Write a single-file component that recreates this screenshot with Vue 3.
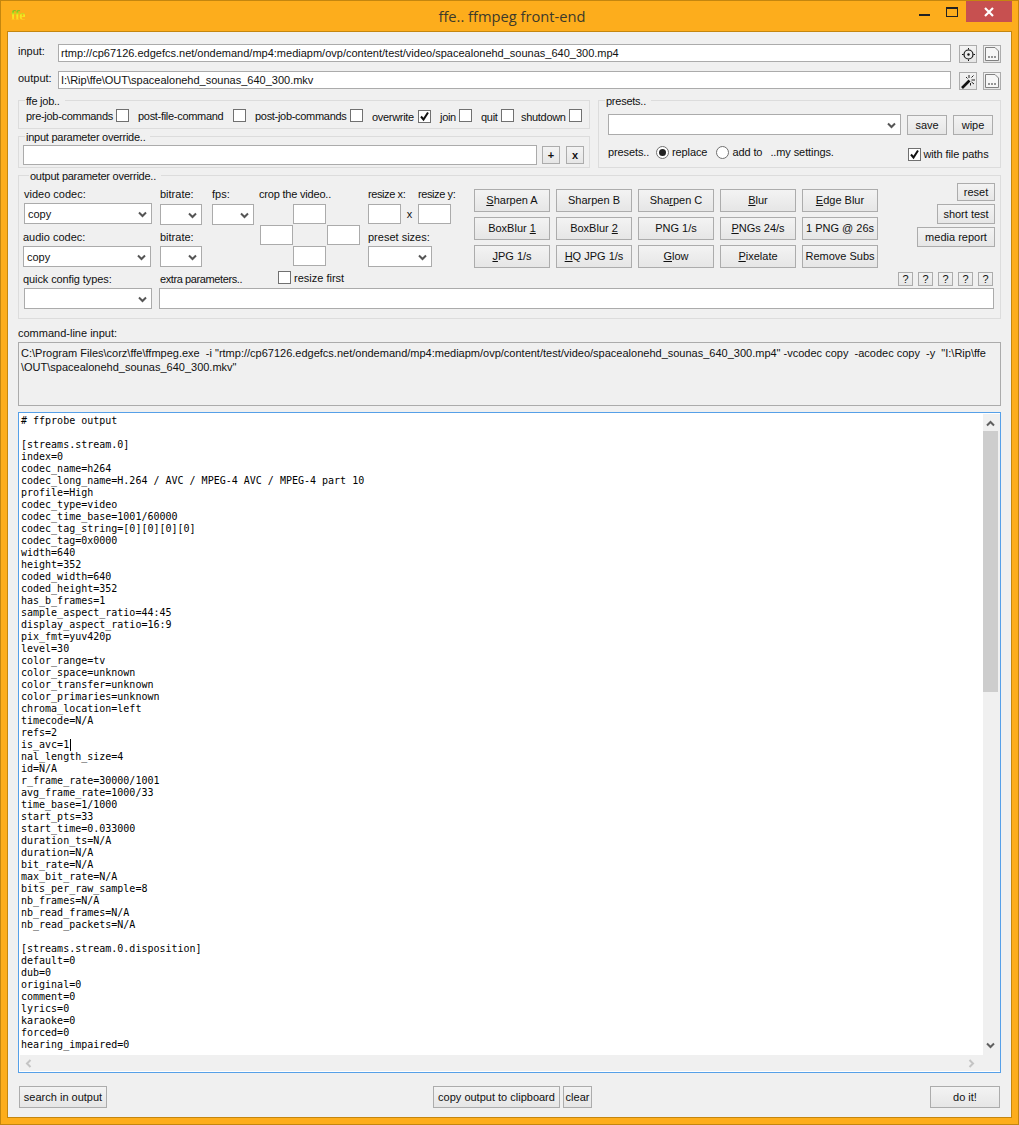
<script setup>
const jobItems = [
  { label: 'pre-job-commands', w: 103 },
  { label: 'post-file-command', w: 108 },
  { label: 'post-job-commands', w: 108 },
  { label: 'overwrite', w: 59, checked: true, low: true },
  { label: 'join', w: 32, low: true },
  { label: 'quit', w: 33, low: true },
  { label: 'shutdown', w: 61, low: true, shift: -2 },
]
const filters = [
  ['', 'S', 'harpen A'], ['Sharpen B', '', ''], ['Sha', 'r', 'pen C'], ['', 'B', 'lur'], ['', 'E', 'dge Blur'],
  ['BoxBlur ', '1', ''], ['BoxBlur ', '2', ''], ['PNG 1/s', '', ''], ['', 'P', 'NGs 24/s'], ['1 PNG @ 26s', '', ''],
  ['', 'J', 'PG 1/s'], ['', 'H', 'Q JPG 1/s'], ['', 'G', 'low'], ['', 'P', 'ixelate'], ['Remove Subs', '', ''],
]
const before = `# ffprobe output

[streams.stream.0]
index=0
codec_name=h264
codec_long_name=H.264 / AVC / MPEG-4 AVC / MPEG-4 part 10
profile=High
codec_type=video
codec_time_base=1001/60000
codec_tag_string=[0][0][0][0]
codec_tag=0x0000
width=640
height=352
coded_width=640
coded_height=352
has_b_frames=1
sample_aspect_ratio=44:45
display_aspect_ratio=16:9
pix_fmt=yuv420p
level=30
color_range=tv
color_space=unknown
color_transfer=unknown
color_primaries=unknown
chroma_location=left
timecode=N/A
refs=2
`
const after = `
nal_length_size=4
id=N/A
r_frame_rate=30000/1001
avg_frame_rate=1000/33
time_base=1/1000
start_pts=33
start_time=0.033000
duration_ts=N/A
duration=N/A
bit_rate=N/A
max_bit_rate=N/A
bits_per_raw_sample=8
nb_frames=N/A
nb_read_frames=N/A
nb_read_packets=N/A

[streams.stream.0.disposition]
default=0
dub=0
original=0
comment=0
lyrics=0
karaoke=0
forced=0
hearing_impaired=0`
</script>

<template>
  <div class="window">
    <header class="titlebar">
      <div class="app-icon">ffe</div>
      <div class="title">ffe.. ffmpeg front-end</div>
      <div class="controls">
        <span class="min"></span>
        <span class="max"></span>
        <span class="close">
          <svg width="12" height="10" viewBox="0 0 12 10"><path d="M2 1l8 8M10 1l-8 8" stroke="#fff" stroke-width="2.2" fill="none"/></svg>
        </span>
      </div>
    </header>

    <main class="client">
      <div class="path-row">
        <span class="path-label">input:</span>
        <div class="field path-field">rtmp://cp67126.edgefcs.net/ondemand/mp4:mediapm/ovp/content/test/video/spacealonehd_sounas_640_300.mp4</div>
        <button class="btn icon-btn first">
          <svg width="13" height="13" viewBox="0 0 13 13"><circle cx="6.500" cy="6.500" r="4.500" fill="none" stroke="#111" stroke-width="1.200"/><circle cx="6.500" cy="6.500" r="1.200" fill="#111"/><path d="M6.500 0v1.500M6.500 11.500V13M0 6.500h1.500M11.500 6.500H13" stroke="#111"/></svg>
        </button>
        <button class="btn icon-btn">
          <svg width="14" height="14" viewBox="0 0 14 14"><path d="M.5.5h9.500l3.500 3.500v9.500H.5z" fill="#f6f6f6" stroke="#808080"/><path d="M3 10h2M6 10h2M9 10h2" stroke="#333"/></svg>
        </button>
      </div>
      <div class="path-row second">
        <span class="path-label">output:</span>
        <div class="field path-field">I:\Rip\ffe\OUT\spacealonehd_sounas_640_300.mkv</div>
        <button class="btn icon-btn first">
          <svg width="15" height="15" viewBox="0 0 15 15"><path d="M1 14L8.500 6.500" stroke="#111" stroke-width="2.600"/><path d="M8 1v3M12.500 1.500l-2 2M14 6h-3.500M13 10l-2.500-2M9.500 9v2.500M5 3l1.500 1.500" stroke="#222" stroke-width="1" fill="none"/></svg>
        </button>
        <button class="btn icon-btn">
          <svg width="14" height="14" viewBox="0 0 14 14"><path d="M.5.5h9.500l3.500 3.500v9.500H.5z" fill="#f6f6f6" stroke="#808080"/><path d="M3 10h2M6 10h2M9 10h2" stroke="#333"/></svg>
        </button>
      </div>

      <section class="upper">
        <div class="upper-left">
          <div class="group job">
            <span class="legend">ffe job..</span>
            <div class="job-row">
              <label v-for="item in jobItems" :key="item.label" class="job-item" :style="{ width: item.w + 'px', marginLeft: (item.shift || 0) + 'px' }">
                <span :class="{ low: item.low }">{{ item.label }}</span>
                <span class="check" :class="{ low: item.checked }">
                  <svg v-if="item.checked" width="11" height="11" viewBox="0 0 11 11"><path d="M2 5.500l2.500 3L9 1.500" fill="none" stroke="#111" stroke-width="2"/></svg>
                </span>
              </label>
            </div>
          </div>
          <div class="group param">
            <span class="legend">input parameter override..</span>
            <div class="param-row">
              <div class="field param-field"></div>
              <button class="btn small-btn bold">+</button>
              <button class="btn small-btn bold">x</button>
            </div>
          </div>
        </div>

        <div class="group presets">
          <span class="legend">presets..</span>
          <div class="preset-top">
            <div class="field select preset-select">
              <svg class="chev" width="9" height="7" viewBox="0 0 9 7"><path d="M1 1.500l3.500 3.500L8 1.500" fill="none" stroke="#555" stroke-width="2"/></svg>
            </div>
            <button class="btn save">save</button>
            <button class="btn wipe">wipe</button>
          </div>
          <div class="preset-bottom">
            <span class="p-label">presets..</span>
            <span class="radio on"></span>
            <span class="r-label">replace</span>
            <span class="radio off"></span>
            <span class="r-label add">add to</span>
            <span class="my">..my settings.</span>
            <span class="check paths">
              <svg width="11" height="11" viewBox="0 0 11 11"><path d="M2 5.500l2.500 3L9 1.500" fill="none" stroke="#111" stroke-width="2"/></svg>
            </span>
            <span class="r-label paths-label">with file paths</span>
          </div>
        </div>
      </section>

      <section class="group output-group">
        <span class="legend out-legend">output parameter override..</span>
        <div class="out-grid">
          <span class="lbl c-video-l">video codec:</span>
          <div class="field select c-video">copy<svg class="chev" width="9" height="7" viewBox="0 0 9 7"><path d="M1 1.500l3.500 3.500L8 1.500" fill="none" stroke="#555" stroke-width="2"/></svg></div>
          <span class="lbl c-br1-l">bitrate:</span>
          <div class="field select c-br1"><svg class="chev" width="9" height="7" viewBox="0 0 9 7"><path d="M1 1.500l3.500 3.500L8 1.500" fill="none" stroke="#555" stroke-width="2"/></svg></div>
          <span class="lbl c-fps-l">fps:</span>
          <div class="field select c-fps"><svg class="chev" width="9" height="7" viewBox="0 0 9 7"><path d="M1 1.500l3.500 3.500L8 1.500" fill="none" stroke="#555" stroke-width="2"/></svg></div>
          <span class="lbl c-crop-l">crop the video..</span>
          <div class="field crop crop-t"></div>
          <div class="field crop crop-l"></div>
          <div class="field crop crop-r"></div>
          <div class="field crop crop-b"></div>
          <span class="lbl c-rx-l">resize x:</span>
          <span class="lbl c-ry-l">resize y:</span>
          <div class="field crop c-rx"></div>
          <span class="c-x">x</span>
          <div class="field crop c-ry"></div>
          <span class="lbl c-audio-l">audio codec:</span>
          <div class="field select c-audio">copy<svg class="chev" width="9" height="7" viewBox="0 0 9 7"><path d="M1 1.500l3.500 3.500L8 1.500" fill="none" stroke="#555" stroke-width="2"/></svg></div>
          <span class="lbl c-br2-l">bitrate:</span>
          <div class="field select c-br2"><svg class="chev" width="9" height="7" viewBox="0 0 9 7"><path d="M1 1.500l3.500 3.500L8 1.500" fill="none" stroke="#555" stroke-width="2"/></svg></div>
          <span class="lbl c-ps-l">preset sizes:</span>
          <div class="field select c-ps"><svg class="chev" width="9" height="7" viewBox="0 0 9 7"><path d="M1 1.500l3.500 3.500L8 1.500" fill="none" stroke="#555" stroke-width="2"/></svg></div>
          <span class="lbl c-q-l">quick config types:</span>
          <div class="field select c-q"><svg class="chev" width="9" height="7" viewBox="0 0 9 7"><path d="M1 1.500l3.500 3.500L8 1.500" fill="none" stroke="#555" stroke-width="2"/></svg></div>
          <span class="lbl c-ex-l">extra parameters..</span>
          <div class="c-first"><span class="check"></span><span>resize first</span></div>
          <div class="field c-ex"></div>

          <div class="filters">
            <button v-for="(f, i) in filters" :key="i" class="btn filter">{{ f[0] }}<u>{{ f[1] }}</u>{{ f[2] }}</button>
          </div>
          <div class="side">
            <button class="btn reset">reset</button>
            <button class="btn short">short test</button>
            <button class="btn report">media report</button>
            <div class="helps">
              <button v-for="n in 5" :key="n" class="btn help">?</button>
            </div>
          </div>
        </div>
      </section>

      <div class="cmd-label">command-line input:</div>
      <div class="cmd">
        <div>C:\Program Files\corz\ffe\ffmpeg.exe &nbsp;-i "rtmp://cp67126.edgefcs.net/ondemand/mp4:mediapm/ovp/content/test/video/spacealonehd_sounas_640_300.mp4" -vcodec copy &nbsp;-acodec copy &nbsp;-y &nbsp;"I:\Rip\ffe</div>
        <div>\OUT\spacealonehd_sounas_640_300.mkv"</div>
      </div>

      <div class="console">
        <div class="console-main">
          <pre class="console-text">{{ before }}is_avc=1<span class="caret"></span>{{ after }}</pre>
          <div class="vbar">
            <svg class="arrow" width="9" height="7" viewBox="0 0 9 7"><path d="M1 5.500L4.500 2 8 5.500" fill="none" stroke="#606060" stroke-width="2"/></svg>
            <div class="thumb"></div>
            <svg class="arrow down" width="9" height="7" viewBox="0 0 9 7"><path d="M1 1.500L4.500 5 8 1.500" fill="none" stroke="#606060" stroke-width="2"/></svg>
          </div>
        </div>
        <div class="hbar">
          <svg width="7" height="9" viewBox="0 0 7 9"><path d="M5.500 1L2 4.500 5.500 8" fill="none" stroke="#c4c4c4" stroke-width="2"/></svg>
          <svg width="7" height="9" viewBox="0 0 7 9"><path d="M1.500 1L5 4.500 1.500 8" fill="none" stroke="#c4c4c4" stroke-width="2"/></svg>
        </div>
      </div>

      <footer class="foot">
        <button class="btn search">search in output</button>
        <button class="btn copy">copy output to clipboard</button>
        <button class="btn clear">clear</button>
        <button class="btn doit">do it!</button>
      </footer>
    </main>
  </div>
</template>

<style>
html, body { margin: 0; padding: 0; background: #fdad1c; }
</style>

<style scoped>
* { box-sizing: border-box; }
.window {
  width: 1019px; height: 1125px; background: #fdad1c; border: 1px solid #c4860f;
  display: flex; flex-direction: column; font: 11px/14px "Liberation Sans", Arial, sans-serif; color: #111;
}
.titlebar { height: 30px; flex: none; display: grid; grid-template-columns: 1fr auto 1fr; padding: 0 6px 0 10px; }
.app-icon {
  font: bold 14px/14px "Liberation Serif", serif; letter-spacing: -0.5px; height: 14px; margin-top: 8px; justify-self: start;
  background: linear-gradient(#58c020 0, #8cd020 3px, #f4ec20 6px, #ffd820 10px, #f06018 13px);
  -webkit-background-clip: text; background-clip: text; color: transparent;
}
.title { font: 14.700px/30px "Open Sans", sans-serif; color: #3d3a2a; padding-left: 1px; }
.controls { display: flex; justify-content: flex-end; align-items: flex-start; }
.min { width: 11px; height: 2px; background: #222; margin: 13px 16px 0 0; }
.max { width: 12px; height: 10px; border: 1px solid #222; border-top-width: 2px; margin: 6px 8px 0 0; }
.close { width: 46px; height: 21px; background: #c75050; display: flex; align-items: center; justify-content: center; }

.client {
  flex: 1; margin: 0 6px 6px; background: #f0f0f0; border: 1px solid #c4860f; padding: 12px 10px 0;
  display: flex; flex-direction: column;
}
.field { background: #fff; border: 1px solid #ababab; display: flex; align-items: center; flex: none; }
.btn {
  background: linear-gradient(#f3f3f3, #e6e6e6); border: 1px solid #acacac; font: 11px/14px "Liberation Sans", Arial, sans-serif;
  color: #111; padding: 0; margin: 0; display: flex; align-items: center; justify-content: center; flex: none; white-space: pre;
}
.path-row { display: flex; height: 19px; }
.path-row.second { margin-top: 8px; }
.path-label { width: 40px; line-height: 14px; }
.path-field { width: 893px; height: 18px; padding-left: 2px; white-space: nowrap; }
.icon-btn { width: 18px; height: 18px; margin: 1px 0 0 6px; }
.icon-btn.first { margin-left: 8px; }

.group { border: 1px solid #dcdcdc; position: relative; }
.legend { position: absolute; left: 6px; top: -6px; background: #f0f0f0; padding: 0 5px 0 1px; line-height: 12px; white-space: nowrap; letter-spacing: -0.25px; }
.upper { display: flex; gap: 8px; margin-top: 10px; }
.upper-left { width: 572px; display: flex; flex-direction: column; gap: 7px; }
.job { height: 29px; padding: 8px 0 0 7px; }
.job-row { display: flex; gap: 9px; }
.job-item { display: flex; justify-content: space-between; align-items: center; height: 13px; white-space: nowrap; letter-spacing: -0.3px; }
.check { width: 13px; height: 13px; border: 1px solid #707070; background: #fff; display: inline-flex; align-items: center; justify-content: center; flex: none; }
.low { position: relative; top: 1px; }
.param { height: 32px; padding: 8px 0 0 4px; }
.param-row { display: flex; }
.param-field { width: 514px; height: 20px; }
.small-btn { width: 18px; height: 18px; margin: 1px 0 0 5px; }
.small-btn + .small-btn { margin-left: 6px; }
.bold { font-weight: bold; }
.presets { width: 403px; height: 68px; padding: 13px 0 0 9px; }
.select { position: relative; padding-left: 3px; }
.chev { position: absolute; right: 4px; top: 50%; margin-top: -3px; }
.preset-top { display: flex; }
.preset-select { width: 293px; height: 21px; }
.save { width: 40px; height: 20px; margin: 1px 0 0 6px; }
.wipe { width: 40px; height: 20px; margin: 1px 0 0 6px; }
.preset-bottom { display: flex; align-items: center; height: 14px; margin-top: 10px; white-space: nowrap; letter-spacing: -0.1px; }
.p-label { width: 48px; }
.radio { width: 13px; height: 13px; border: 1px solid #707070; border-radius: 50%; background: #fff; position: relative; flex: none; }
.radio.on::after { content: ""; position: absolute; left: 2px; top: 2px; width: 7px; height: 7px; border-radius: 50%; background: #222; }
.r-label { margin-left: 3px; }
.radio.off { margin-left: 9px; }
.add { width: 38px; }
.my { width: 138px; }
.paths { position: relative; top: 2px; }
.paths-label { margin-left: 2px; position: relative; top: 2px; }

.output-group { margin-top: 7px; height: 144px; padding: 8px 0 0 4px; }
.out-legend { left: 10px; }
.out-grid {
  display: grid;
  grid-template-columns: 137px 52px 48px 33px 34px 41px 33px 17px 56px 404px 117px;
  grid-template-rows: 19px 22px 21px 21px 21px 21px;
}
.lbl { align-self: end; padding-bottom: 2px; white-space: nowrap; }
.c-video-l { grid-area: 1 / 1; padding-left: 1px; }
.c-video { grid-area: 2 / 1; width: 128px; height: 21px; margin-left: 1px; }
.c-br1-l { grid-area: 1 / 2; }
.c-br1 { grid-area: 2 / 2; width: 42px; height: 21px; margin-top: 1px; }
.c-fps-l { grid-area: 1 / 3; }
.c-fps { grid-area: 2 / 3; width: 42px; height: 21px; margin-top: 1px; }
.c-crop-l { grid-area: 1 / 4 / 1 / 7; letter-spacing: -0.2px; margin-left: -1px; }
.crop { width: 33px; height: 20px; }
.crop-t { grid-area: 2 / 5; margin-top: 1px; }
.crop-l { grid-area: 3 / 4; }
.crop-r { grid-area: 3 / 6; }
.crop-b { grid-area: 4 / 5; }
.c-rx-l { grid-area: 1 / 7 / 1 / 9; letter-spacing: -0.4px; }
.c-ry-l { grid-area: 1 / 9; letter-spacing: -0.4px; }
.c-rx { grid-area: 2 / 7; margin-top: 1px; }
.c-x { grid-area: 2 / 8; align-self: center; justify-self: center; }
.c-ry { grid-area: 2 / 9; margin-top: 1px; }
.c-audio-l { grid-area: 3 / 1; }
.c-audio { grid-area: 4 / 1; width: 128px; height: 21px; }
.c-br2-l { grid-area: 3 / 2; }
.c-br2 { grid-area: 4 / 2; width: 42px; height: 21px; }
.c-ps-l { grid-area: 3 / 7 / 3 / 10; }
.c-ps { grid-area: 4 / 7 / 4 / 10; width: 64px; height: 21px; }
.c-q-l { grid-area: 5 / 1; letter-spacing: -0.1px; }
.c-q { grid-area: 6 / 1; width: 128px; height: 21px; margin-left: 1px; }
.c-ex-l { grid-area: 5 / 2 / 5 / 4; letter-spacing: -0.4px; }
.c-first { grid-area: 5 / 4 / 5 / 10; display: flex; gap: 3px; margin: 4px 0 0 18px; height: 13px; align-items: center; }
.c-ex { grid-area: 6 / 2 / 6 / 12; width: 835px; height: 21px; margin-left: -1px; }
.filters {
  grid-area: 1 / 10 / 6 / 10; display: grid; grid-template-columns: repeat(5, 76px); grid-auto-rows: 23px;
  column-gap: 6px; row-gap: 5px; padding-top: 5px;
}
.filter { padding-bottom: 1px; }
.side { grid-area: 1 / 11 / 6 / 11; display: flex; flex-direction: column; align-items: flex-end; margin-top: -1px; }
.reset { width: 38px; height: 18px; }
.short { width: 58px; height: 20px; margin-top: 3px; }
.report { width: 78px; height: 20px; margin-top: 3px; }
.helps { display: flex; gap: 5px; margin: 25px 2px 0 0; }
.help { width: 15px; height: 14px; }

.cmd-label { margin-top: 7px; height: 15px; }
.cmd { border: 1px solid #ababab; height: 64px; padding: 3px 0 0 2px; background: #f0f0f0; white-space: nowrap; margin-top: 1px; flex: none; }
.console { margin-top: 6px; height: 661px; border: 1px solid #56a0e8; background: #fff; padding: 1px 0 1px 1px; display: flex; flex-direction: column; flex: none; }
.console-main { display: flex; height: 641px; }
.console-text {
  flex: 1; margin: 0; padding: 1px 0 0 1px; overflow: hidden; font: 10px/12px "DejaVu Sans Mono", monospace; color: #000;
}
.caret { display: inline-block; width: 1px; height: 12px; background: #000; vertical-align: top; margin-left: 1px; margin-right: -2px; }
.vbar { width: 17px; flex: none; background: #f0f0f0; display: flex; flex-direction: column; align-items: center; padding-right: 2px; }
.arrow { margin-top: 6px; flex: none; }
.arrow.down { margin-top: auto; margin-bottom: 6px; }
.thumb { width: 15px; height: 261px; background: #cdcdcd; margin-top: 4px; }
.hbar { height: 16px; background: #f0f0f0; display: flex; justify-content: space-between; align-items: center; padding: 0 25px 0 5px; }

.foot { display: flex; margin-top: 13px; }
.search { width: 88px; height: 22px; margin-left: 1px; }
.copy { width: 127px; height: 22px; margin-left: 326px; }
.clear { width: 29px; height: 22px; margin-left: 3px; }
.doit { width: 70px; height: 22px; margin-left: auto; margin-right: 1px; }
</style>
